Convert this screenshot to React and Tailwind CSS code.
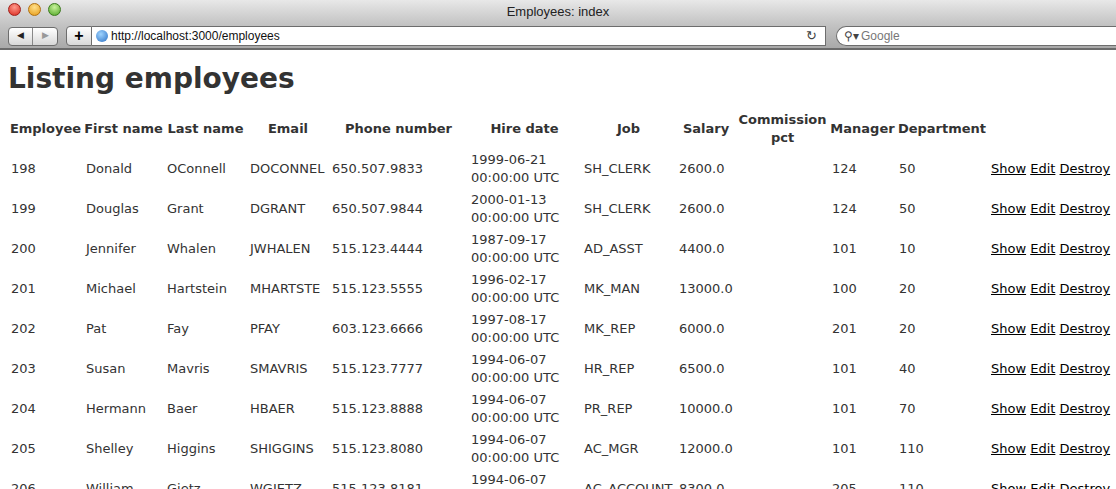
const rows = [
  ["198","Donald","OConnell","DOCONNEL","650.507.9833","1999-06-21","SH_CLERK","2600.0","124","50"],
  ["199","Douglas","Grant","DGRANT","650.507.9844","2000-01-13","SH_CLERK","2600.0","124","50"],
  ["200","Jennifer","Whalen","JWHALEN","515.123.4444","1987-09-17","AD_ASST","4400.0","101","10"],
  ["201","Michael","Hartstein","MHARTSTE","515.123.5555","1996-02-17","MK_MAN","13000.0","100","20"],
  ["202","Pat","Fay","PFAY","603.123.6666","1997-08-17","MK_REP","6000.0","201","20"],
  ["203","Susan","Mavris","SMAVRIS","515.123.7777","1994-06-07","HR_REP","6500.0","101","40"],
  ["204","Hermann","Baer","HBAER","515.123.8888","1994-06-07","PR_REP","10000.0","101","70"],
  ["205","Shelley","Higgins","SHIGGINS","515.123.8080","1994-06-07","AC_MGR","12000.0","101","110"],
  ["206","William","Gietz","WGIETZ","515.123.8181","1994-06-07","AC_ACCOUNT","8300.0","205","110"],
];
const widths = [75,81,83,82,139,113,95,60,93,67,92,128];
const heads = ["Employee","First name","Last name","Email","Phone number","Hire date","Job","Salary","Commission pct","Manager","Department",""];

export default function App() {
  return (
    <div className="w-[1116px] h-[489px] overflow-hidden bg-white" style={{fontFamily:'"DejaVu Sans", Verdana, sans-serif'}}>
      <div className="h-[24px] bg-gradient-to-b from-[#e8e8e8] to-[#c4c4c4] relative flex items-center justify-center">
        <div className="absolute left-[8px] top-[3px] flex gap-[7px]">
          <span className="w-[13px] h-[13px] rounded-full bg-[radial-gradient(circle_at_50%_30%,#ff9a8c,#d9261b)] border border-[#a0201a]"></span>
          <span className="w-[13px] h-[13px] rounded-full bg-[radial-gradient(circle_at_50%_30%,#ffe08a,#e59a16)] border border-[#b07010]"></span>
          <span className="w-[13px] h-[13px] rounded-full bg-[radial-gradient(circle_at_50%_30%,#c8f29a,#4fa526)] border border-[#3b7a1c]"></span>
        </div>
        <span className="text-[13px] text-[#222]" style={{fontFamily:'"Liberation Sans", sans-serif'}}>Employees: index</span>
      </div>
      <div className="h-[24px] bg-gradient-to-b from-[#c4c4c4] to-[#a9a9a9] flex items-center pl-[8px] gap-[8px]" style={{fontFamily:'"Liberation Sans", sans-serif'}}>
        <div className="flex h-[19px] rounded-[4px] border border-[#6d6d6d] bg-gradient-to-b from-white to-[#d8d8d8] overflow-hidden">
          <span className="w-[24px] flex items-center justify-center text-[9px] text-[#222] border-r border-[#888]">◀</span>
          <span className="w-[24px] flex items-center justify-center text-[9px] text-[#999]">▶</span>
        </div>
        <div className="flex h-[20px] flex-1">
          <span className="w-[26px] flex items-center justify-center text-[16px] font-bold rounded-l-[4px] border border-[#6d6d6d] bg-gradient-to-b from-white to-[#d8d8d8]">+</span>
          <div className="flex-1 bg-white border border-l-0 border-[#6d6d6d] flex items-center pl-[4px] text-[12px] text-[#111]">
            <span className="w-[12px] h-[12px] rounded-full bg-[radial-gradient(circle_at_40%_35%,#9fd4ff,#2a6fc4)] mr-[3px]"></span>
            http://localhost:3000/employees
            <span className="ml-auto mr-[8px] text-[13px] text-[#444]">↻</span>
          </div>
          <div className="ml-[10px] w-[280px] bg-white border border-r-0 border-[#6d6d6d] rounded-l-full flex items-center pl-[7px] text-[12px] text-[#777]">
            <span className="text-[#444] mr-[2px]">⚲▾</span>Google
          </div>
        </div>
      </div>
      <div className="h-[2px] bg-[#6b6b6b]"></div>
      <div className="px-[8px] text-[#333]">
        <h1 className="text-[28px] font-bold mt-[13px] mb-[14px] leading-[32px]">Listing employees</h1>
        <table className="border-collapse text-[13px] table-fixed w-[1108px]">
          <colgroup>{widths.map((w,i)=><col key={i} style={{width:w}} />)}</colgroup>
          <thead>
            <tr>
              {heads.map((h,i)=>(
                <th key={i} className={"text-center font-bold leading-[18px] px-0 py-[2px] align-middle " + (i===8 ? "" : "whitespace-nowrap")}>{h}</th>
              ))}
            </tr>
          </thead>
          <tbody>
            {rows.map(r=>(
              <tr key={r[0]} className="h-[40px]">
                {r.slice(0,5).map((c,i)=><td key={i} className="px-[3px] leading-[18px] align-middle whitespace-nowrap">{c}</td>)}
                <td className="px-[3px] leading-[18px] align-middle whitespace-nowrap">{r[5]}<br/>00:00:00 UTC</td>
                <td className="px-[3px] align-middle whitespace-nowrap">{r[6]}</td>
                <td className="px-[3px] align-middle">{r[7]}</td>
                <td className="px-[3px] align-middle"></td>
                <td className="px-[3px] align-middle">{r[8]}</td>
                <td className="px-[3px] align-middle">{r[9]}</td>
                <td className="px-[3px] align-middle whitespace-nowrap text-black"><span className="underline">Show</span> <span className="underline">Edit</span> <span className="underline">Destroy</span></td>
              </tr>
            ))}
          </tbody>
        </table>
      </div>
    </div>
  );
}
